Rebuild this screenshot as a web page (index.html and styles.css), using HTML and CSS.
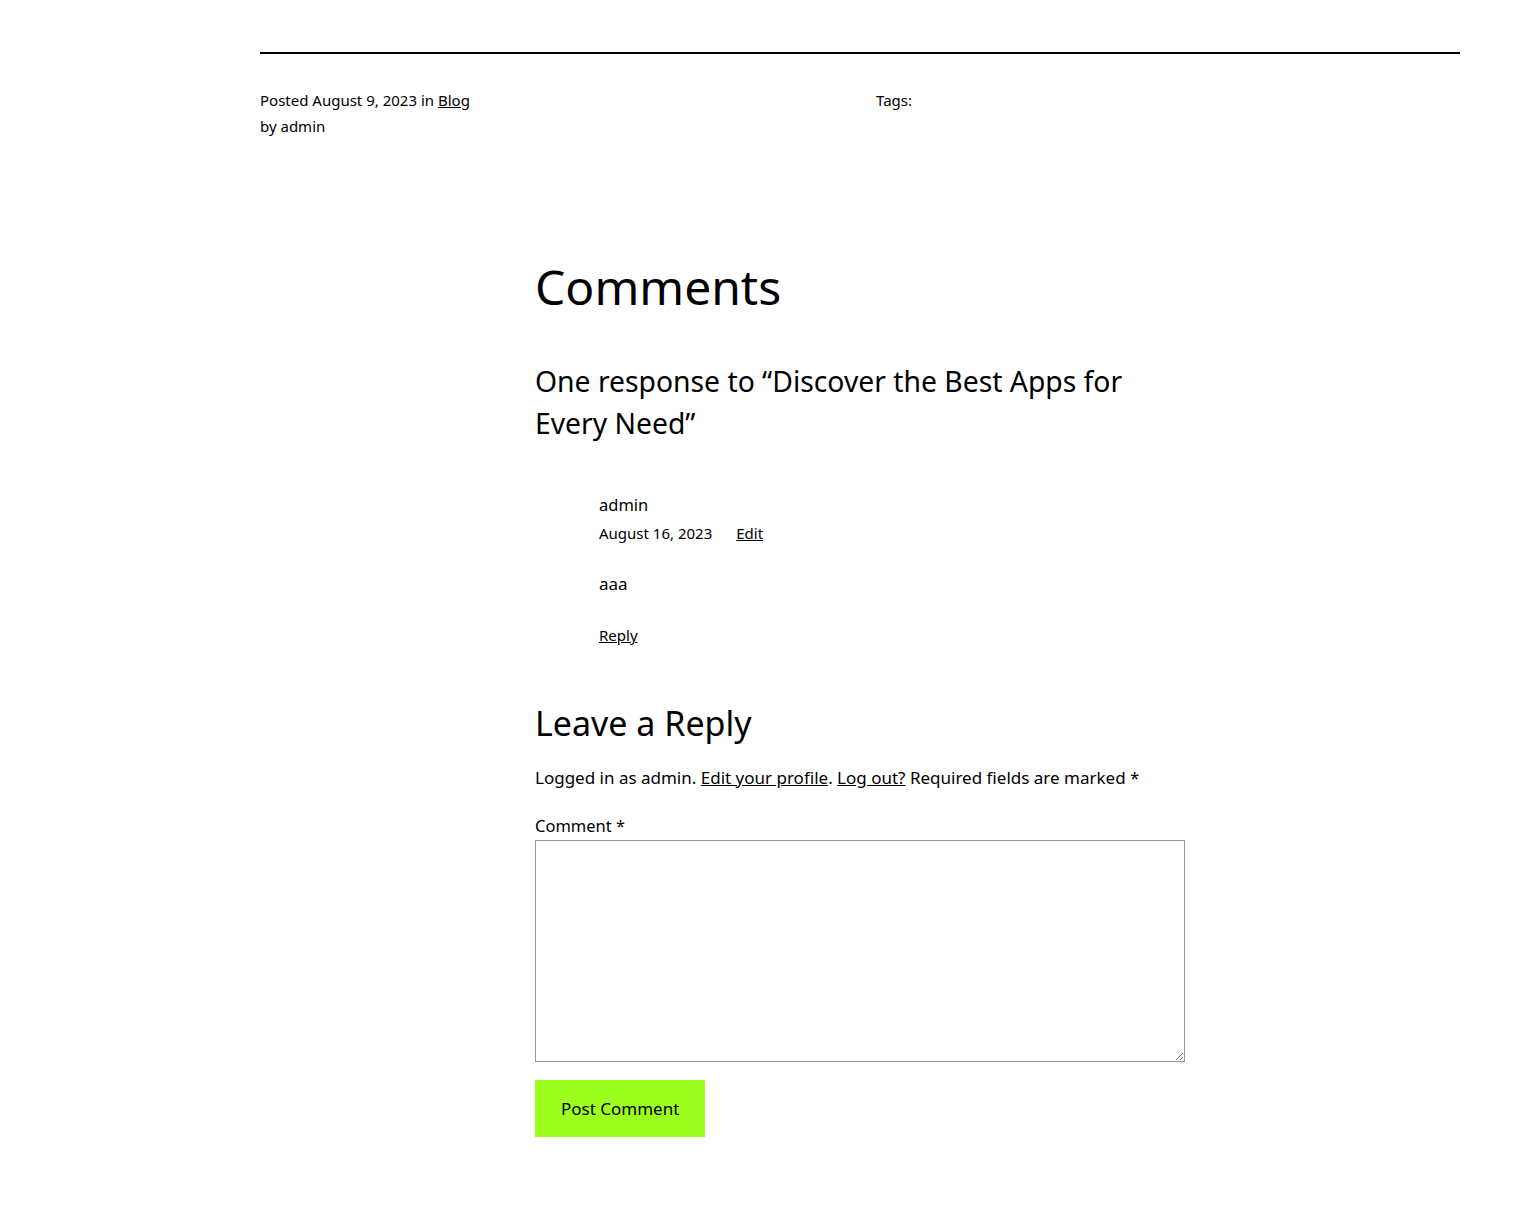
FILE: index.html
```html
<!DOCTYPE html>
<html lang="en">
<head>
    <meta charset="UTF-8">
    <meta name="viewport" content="width=device-width, initial-scale=1.0">
    <title>Discover the Best Apps for Every Need</title>
    <link rel="stylesheet" href="styles.css">
</head>
<body>
    <div class="wrap">
        <hr class="post-rule">
        <div class="post-meta">
            <div class="meta-col">
                <div>Posted August 9, 2023 in <a href="#">Blog</a></div>
                <div>by admin</div>
            </div>
            <div class="meta-col">Tags:</div>
        </div>

        <section class="comments">
            <h2 class="comments-title">Comments</h2>
            <h3 class="responses-title">One response to “Discover the Best Apps for Every Need”</h3>

            <div class="comment">
                <div class="comment-author">admin</div>
                <div class="comment-meta">
                    <span>August 16, 2023</span>
                    <a href="#">Edit</a>
                </div>
                <p class="comment-body">aaa</p>
                <a href="#" class="comment-reply">Reply</a>
            </div>

            <h3 class="reply-title">Leave a Reply</h3>
            <form class="comment-form">
                <p class="logged-in">Logged in as admin. <a href="#">Edit your profile</a>. <a href="#">Log out?</a> Required fields are marked *</p>
                <label for="comment">Comment *</label>
                <textarea id="comment" name="comment"></textarea>
                <button type="submit">Post Comment</button>
            </form>
        </section>
    </div>
</body>
</html>
```

FILE: styles.css
```css
body { margin: 0; font-family: "Noto Sans", sans-serif; color: #000; background: #fff; }
a { color: #000; }
.wrap { width: 1200px; margin-left: 260px; padding-top: 52px; padding-bottom: 90px; }
.post-rule { border: 0; border-top: 2px solid #000; margin: 0; }
.post-meta { display: grid; grid-template-columns: 1fr 1fr; gap: 32px; margin-top: 33px; font-size: 15px; line-height: 26px; }
.comments { width: 650px; margin: 117px auto 0; }
.comments-title { font-size: 48px; font-weight: 400; line-height: 62px; margin: 0 0 42px; }
.responses-title { font-size: 28.3px; font-weight: 400; line-height: 42px; margin: 0 0 47px; }
.comment { padding-left: 64px; }
.comment-author { font-size: 16.5px; line-height: 28px; }
.comment-meta { font-size: 15px; line-height: 28px; display: flex; gap: 24px; }
.comment-body { font-size: 17px; margin: 25px 0 29px; }
.comment-reply { font-size: 15px; }
.reply-title { font-size: 34px; font-weight: 400; line-height: 46px; margin: 54px 0 19px; }
.logged-in { font-size: 17px; line-height: 26px; margin: 0 0 21px; }
.comment-form label { display: block; font-size: 16.5px; line-height: 28px; }
.comment-form textarea { display: block; width: 650px; height: 222px; box-sizing: border-box; border: 1px solid #949494; margin: 0 0 18px; font-family: inherit; }
.comment-form button { background: #9dff1f; border: 0; padding: 0 26px; height: 57px; font-family: inherit; font-size: 17px; color: #000; cursor: pointer; }
```
